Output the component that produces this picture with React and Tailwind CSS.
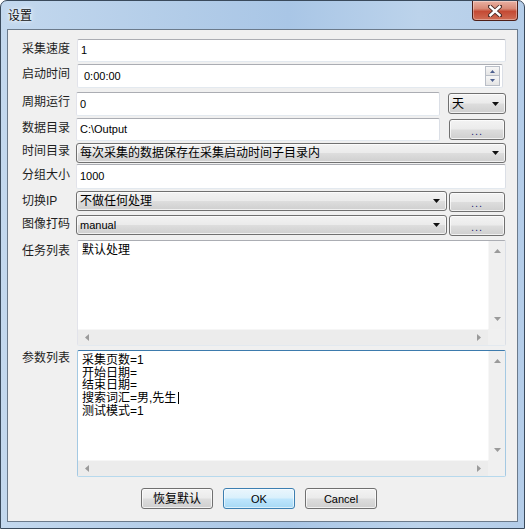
import React from "react";

const Label = ({ children }) => (
  <div className="w-[54px] shrink-0 leading-[14px] text-[12px] -mt-[4px] text-[#1e1e1e]">{children}</div>
);

const DownArrow = () => (
  <svg width="7" height="4" viewBox="0 0 7 4" className="shrink-0">
    <path d="M0 0H7L3.5 4Z" fill="#111" />
  </svg>
);

const Combo = ({ className, children }) => (
  <div
    className={`flex items-center justify-between pl-[3px] pr-[6px] border border-[#707070] rounded-[3px] bg-[linear-gradient(180deg,#f3f3f3_0%,#ebebeb_48%,#dddddd_52%,#cfcfcf_100%)] shadow-[inset_0_0_0_1px_rgba(255,255,255,0.7)] ${className}`}
  >
    <span className="leading-[14px] truncate">{children}</span>
    <DownArrow />
  </div>
);

const DotsButton = ({ className }) => (
  <div
    className={`flex items-center justify-center border border-[#707070] rounded-[3px] bg-[linear-gradient(180deg,#f3f3f3_0%,#ebebeb_48%,#dddddd_52%,#cfcfcf_100%)] shadow-[inset_0_0_0_1px_rgba(255,255,255,0.7)] text-[11px] text-[#2a1f7a] leading-none ${className}`}
  >
    <span className="mt-[3px] tracking-[1px]">...</span>
  </div>
);

const TextBox = ({ className, children }) => (
  <div
    className={`flex items-center bg-white border border-t-[#abadb3] border-l-[#e2e3ea] border-r-[#dbdfe6] border-b-[#e3e9ef] rounded-[2px] ${className}`}
  >
    {children}
  </div>
);

const VArrow = ({ up }) => (
  <svg width="7" height="4" viewBox="0 0 7 4">
    <path d={up ? "M3.5 0L7 4H0Z" : "M0 0H7L3.5 4Z"} fill="#9a9a9a" />
  </svg>
);

const HArrow = ({ left }) => (
  <svg width="4" height="7" viewBox="0 0 4 7">
    <path d={left ? "M0 3.5L4 0V7Z" : "M4 3.5L0 0V7Z"} fill="#9a9a9a" />
  </svg>
);

const ScrollBox = ({ focused, children }) => (
  <div
    className={`w-[429px] h-full flex flex-col bg-white rounded-[2px] border ${
      focused
        ? "border-t-[#3d7bad] border-l-[#a4c9e3] border-r-[#a4c9e3] border-b-[#b7d9ed]"
        : "border-t-[#abadb3] border-l-[#e2e3ea] border-r-[#dbdfe6] border-b-[#e3e9ef]"
    }`}
  >
    <div className="flex-1 flex min-h-0">
      <div className="flex-1 pl-[4px] pt-[3px] text-[12px] leading-[12.7px] text-black">{children}</div>
      <div className="w-[17px] flex flex-col items-center justify-between py-[8px] bg-[#efefef] border-l border-[#f7f7f7]">
        <VArrow up />
        <VArrow />
      </div>
    </div>
    <div className="h-[16px] flex">
      <div className="flex-1 flex items-center justify-between px-[7px] bg-[#ececec] border-t border-[#f6f6f6]">
        <HArrow left />
        <HArrow />
      </div>
      <div className="w-[17px] bg-[#f0f0f0]" />
    </div>
  </div>
);

const Spin = () => (
  <div className="flex flex-col mr-[2px]">
    <div className="w-[15px] h-[10px] flex items-center justify-center border border-[#b9bec7] bg-[linear-gradient(180deg,#f7f7f7,#e4e4e4)]">
      <svg width="5" height="3" viewBox="0 0 5 3"><path d="M2.5 0L5 3H0Z" fill="#4c5f8e" /></svg>
    </div>
    <div className="w-[15px] h-[10px] flex items-center justify-center border border-t-0 border-[#b9bec7] bg-[linear-gradient(180deg,#f7f7f7,#e4e4e4)]">
      <svg width="5" height="3" viewBox="0 0 5 3"><path d="M0 0H5L2.5 3Z" fill="#4c5f8e" /></svg>
    </div>
  </div>
);

const Btn = ({ primary, children }) => (
  <div
    className={`w-[72px] h-[21px] flex items-center justify-center rounded-[3px] border ${
      primary
        ? "border-[#3c7fb1] bg-[linear-gradient(180deg,#eaf6fd_0%,#d9f0fc_48%,#bee6fd_52%,#a7d9f5_100%)] shadow-[inset_0_0_0_1px_rgba(255,255,255,0.6)]"
        : "border-[#707070] bg-[linear-gradient(180deg,#f3f3f3_0%,#ebebeb_48%,#dddddd_52%,#cfcfcf_100%)] shadow-[inset_0_0_0_1px_rgba(255,255,255,0.7)]"
    }`}
  >
    <span className="leading-[14px]">{children}</span>
  </div>
);

export default function App() {
  return (
    <div className="w-[525px] h-[529px] overflow-hidden rounded-t-[7px] border border-[#3a4a5c] bg-[linear-gradient(90deg,#c3d8ee_0%,#b2cce8_35%,#a9c6e6_55%,#bcd3eb_80%,#b4cde9_100%)] font-['Liberation_Sans','Noto_Sans_CJK_SC',sans-serif] text-[12px] text-black">
      <div className="h-[28px] flex items-start justify-between">
        <span className="ml-[7px] mt-[8px] leading-[14px] text-[12px] text-[#111] [text-shadow:0_0_6px_#ffffff,0_0_3px_#ffffff]">设置</span>
        <div className="mr-[6px] w-[46px] h-[20px] flex items-center justify-center rounded-b-[4px] border border-t-0 border-[#4e1f18] bg-[linear-gradient(180deg,#eab1a3_0%,#d88a77_40%,#c44a34_55%,#cf6d55_100%)] shadow-[inset_0_0_0_1px_rgba(255,255,255,0.35)]">
          <svg width="14" height="12" viewBox="0 0 14 12">
            <path d="M2 1.5L12 10.5M12 1.5L2 10.5" stroke="#4a2a26" strokeWidth="4.2" strokeLinecap="square" />
            <path d="M2.4 1.8L11.6 10.2M11.6 1.8L2.4 10.2" stroke="#ffffff" strokeWidth="2.4" strokeLinecap="square" />
          </svg>
        </div>
      </div>

      <div className="ml-[6px] w-[511px] h-[493px] border border-[#6b7a8b] bg-[#f0f0f0] flex flex-col pl-[14px]">
        <div className="mt-[9px] h-[23px] flex items-center">
          <Label>采集速度</Label>
          <TextBox className="ml-px w-[429px] h-[23px] pl-[3px] text-[11px]">1</TextBox>
        </div>

        <div className="mt-[2px] h-[24px] flex items-center">
          <Label>启动时间</Label>
          <TextBox className="ml-px w-[426px] h-[24px] pl-[6px] justify-between text-[11px]">
            <span>0:00:00</span>
            <Spin />
          </TextBox>
        </div>

        <div className="mt-[4px] h-[24px] flex items-center">
          <Label>周期运行</Label>
          <TextBox className="w-[364px] h-[24px] pl-[3px] text-[11px]">0</TextBox>
          <Combo className="ml-[8px] w-[58px] h-[21px] self-start mt-px">天</Combo>
        </div>

        <div className="mt-[2px] h-[23px] flex items-center">
          <Label>数据目录</Label>
          <TextBox className="w-[364px] h-[23px] pl-[3px] text-[11px]">C:\Output</TextBox>
          <DotsButton className="ml-[9px] w-[56px] h-[21px]" />
        </div>

        <div className="mt-[2px] h-[20px] flex items-center">
          <Label>时间目录</Label>
          <Combo className="w-[430px] h-[20px]">每次采集的数据保存在采集启动时间子目录内</Combo>
        </div>

        <div className="mt-px h-[25px] flex items-center">
          <Label>分组大小</Label>
          <TextBox className="w-[430px] h-[25px] pl-[3px] text-[11px]">1000</TextBox>
        </div>

        <div className="mt-[2px] h-[21px] flex items-start">
          <Label>
            <span className="block mt-[7px]">切换IP</span>
          </Label>
          <Combo className="w-[371px] h-[20px]">不做任何处理</Combo>
          <DotsButton className="ml-[2px] w-[56px] h-[20px] mt-px" />
        </div>

        <div className="mt-[3px] h-[21px] flex items-start">
          <Label>
            <span className="block mt-[6px]">图像打码</span>
          </Label>
          <Combo className="w-[371px] h-[20px] text-[11px]">manual</Combo>
          <DotsButton className="ml-[2px] w-[56px] h-[21px]" />
        </div>

        <div className="mt-[4px] h-[106px] flex items-start">
          <div className="w-[54px] shrink-0 pt-[4px] leading-[14px] text-[#1e1e1e]">任务列表</div>
          <div className="ml-px h-full">
            <ScrollBox>默认处理</ScrollBox>
          </div>
        </div>

        <div className="mt-[4px] h-[127px] flex items-start">
          <div className="w-[54px] shrink-0 pt-[1px] leading-[14px] text-[#1e1e1e]">参数列表</div>
          <div className="ml-px h-full">
            <ScrollBox focused>
              <div>采集页数=1</div>
              <div>开始日期=</div>
              <div>结束日期=</div>
              <div className="flex items-center">
                搜索词汇=男,先生<span className="inline-block w-px h-[12px] bg-black ml-[2px]" />
              </div>
              <div>测试模式=1</div>
            </ScrollBox>
          </div>
        </div>

        <div className="mt-[11px] ml-[119px] flex gap-[10px]">
          <Btn>恢复默认</Btn>
          <Btn primary>
            <span className="text-[11px]">OK</span>
          </Btn>
          <Btn>
            <span className="text-[11px]">Cancel</span>
          </Btn>
        </div>
      </div>
    </div>
  );
}
